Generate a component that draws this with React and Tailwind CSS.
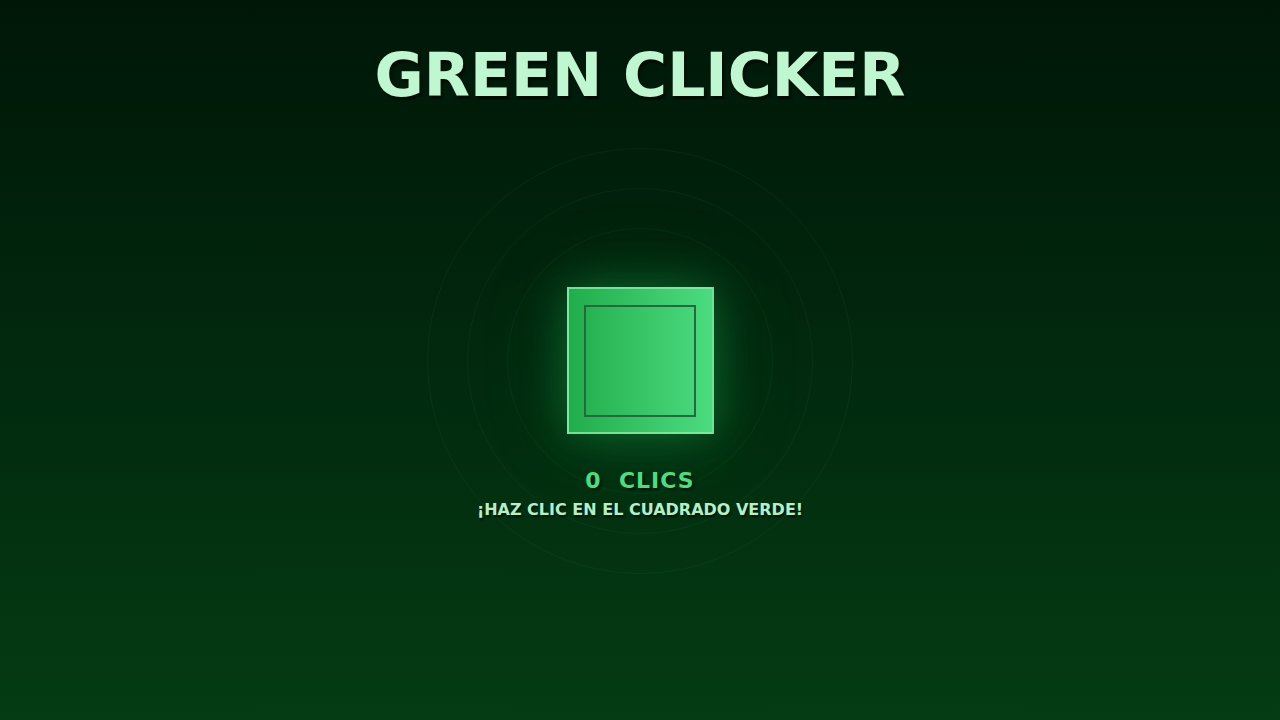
import { useState } from 'react'

export default function App() {
  const [clicks, setClicks] = useState(0)

  return (
    <div
      className="relative h-screen w-full overflow-hidden bg-linear-to-b from-[#001708] to-[#053c13] flex flex-col items-center"
      style={{ fontFamily: '"DejaVu Sans", Verdana, sans-serif' }}
    >
      {/* Title */}
      <h1 className="pt-[45px] text-[60px] leading-none font-bold text-[#bff7d1] [text-shadow:2px_3px_2px_rgba(0,0,0,0.6)]">
        GREEN CLICKER
      </h1>

      {/* Game area */}
      <div className="relative mt-[182px] flex flex-col items-center">
        {/* rings behind the square */}
        <div className="pointer-events-none absolute left-1/2 top-[73.5px] h-0 w-0">
          <div className="absolute -left-[213px] -top-[213px] h-[426px] w-[426px] rounded-full border border-[#4ade80]/[0.06]" />
          <div className="absolute -left-[173px] -top-[173px] h-[346px] w-[346px] rounded-full border border-[#4ade80]/[0.06]" />
          <div className="absolute -left-[133px] -top-[133px] h-[266px] w-[266px] rounded-full border border-[#4ade80]/[0.06]" />
        </div>

        <button
          onClick={() => setClicks(c => c + 1)}
          className="relative ml-px h-[147px] w-[147px] border-2 border-[#86eca6]/80 bg-linear-to-r from-[#20ad4b] to-[#4bdc80] shadow-[0_0_40px_rgba(34,197,94,0.35),0_0_90px_rgba(34,197,94,0.15)] flex items-center justify-center"
        >
          <div className="h-[112px] w-[112px] border-[2.5px] border-[#2a6642]" />
        </button>

        <div className="relative mt-[34px] text-[22px] leading-[1.2] font-bold tracking-[1px] text-[#4ade80] [text-shadow:2px_2px_2px_rgba(0,0,0,0.6)]">
          {clicks}&nbsp;&nbsp;CLICS
        </div>
        <div className="relative mt-[6px] text-[16px] leading-[1.2] font-bold text-[#b4f0c6] [text-shadow:1px_2px_2px_rgba(0,0,0,0.7)]">
          ¡HAZ CLIC EN EL CUADRADO VERDE!
        </div>
      </div>
    </div>
  )
}
